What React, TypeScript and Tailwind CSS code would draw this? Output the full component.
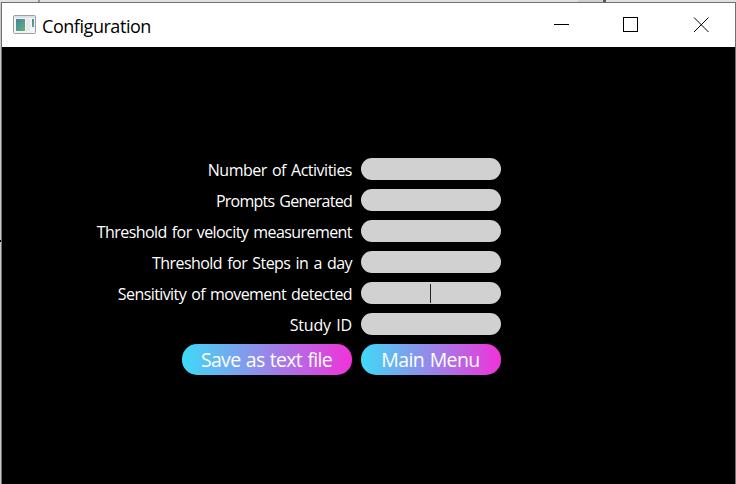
import React from "react";

const fields = [
  { label: "Number of Activities", tracking: "tracking-[-0.5px]" },
  { label: "Prompts Generated", tracking: "tracking-[-0.74px]" },
  { label: "Threshold for velocity measurement", tracking: "tracking-[-0.57px]" },
  { label: "Threshold for Steps in a day", tracking: "tracking-[-0.54px]" },
  { label: "Sensitivity of movement detected", tracking: "tracking-[-0.59px]", caret: true },
  { label: "Study ID", tracking: "tracking-[-0.2px]" },
];

function AppIcon() {
  return (
    <svg width="24" height="20" viewBox="0 0 24 20" className="shrink-0">
      <defs>
        <linearGradient id="pane" x1="0" y1="0" x2="1" y2="1">
          <stop offset="0" stopColor="#4284a0" />
          <stop offset="1" stopColor="#63b278" />
        </linearGradient>
      </defs>
      <rect x="0.5" y="0.5" width="22" height="18" rx="1" fill="#f3f4f5" stroke="#9a9fa5" />
      <rect x="1" y="1" width="21" height="2" fill="#dce0e5" />
      <rect x="3" y="4" width="9" height="12" fill="url(#pane)" />
      <rect x="13" y="4" width="4" height="12" fill="#e7e9ea" />
      <rect x="19" y="4" width="2" height="8" fill="url(#pane)" />
    </svg>
  );
}

export default function App() {
  return (
    <div className="flex h-[484px] w-[736px] flex-col overflow-hidden bg-[#e1e1e1] font-['Open_Sans','Noto_Sans',sans-serif]">
      <div className="flex h-[2px] shrink-0">
        <div className="ml-[38px] w-[2px] bg-[#a98f88]" />
        <div className="ml-[538px] w-[25px] bg-[#d0d0d0]" />
        <div className="w-[3px] bg-[#55555c]" />
      </div>
      <div className="flex min-h-0 flex-1">
        <div className="flex w-px flex-col bg-[#c9c9c9]">
          <div className="mt-[238px] h-[2px] bg-black" />
        </div>
        <div className="flex flex-1 flex-col border-x border-t border-[#707070] bg-black">
          <header className="flex h-[44px] shrink-0 items-center bg-white pl-[11px] text-black">
            <AppIcon />
            <h1 className="ml-[5px] pt-px text-[18px] leading-[24px] tracking-[-0.45px]">Configuration</h1>
            <svg width="156" height="16" viewBox="0 0 156 16" fill="none" stroke="black" className="mr-[25px] ml-auto">
              <path d="M0 7.5H15" />
              <rect x="69.5" y="0.5" width="14" height="14" />
              <path d="M140 0.5L154.5 15M154.5 0.5L140 15" />
            </svg>
          </header>
          <main className="ml-[59px] flex w-[440px] flex-col gap-[9px] pt-[111px]">
            {fields.map(({ label, tracking, caret }) => (
              <label key={label} className="flex h-[22px] items-center justify-end gap-[9px]">
                <span className={`pt-[2px] text-[16px] leading-[22px] whitespace-nowrap text-white [word-spacing:1.5px] ${tracking}`}>
                  {label}
                </span>
                <span className="flex h-[22px] w-[140px] shrink-0 justify-center rounded-[11px] bg-[#d1d1d1] pt-[2px]">
                  {caret && <span className="mr-px h-[19px] w-px bg-[#222]" />}
                </span>
              </label>
            ))}
            <div className="flex justify-end gap-[9px] text-white">
              <button className="h-[31px] w-[170px] rounded-[15px] bg-[linear-gradient(to_right,#3fdaf7,#f132da)] pt-px pr-px text-[19.5px] leading-[30px] tracking-[-0.7px] whitespace-nowrap [word-spacing:1px]">
                Save as text file
              </button>
              <button className="h-[31px] w-[140px] rounded-[15px] bg-[linear-gradient(to_right,#3fdaf7,#f132da)] pt-px pr-px text-[19.5px] leading-[30px] tracking-[-0.6px] whitespace-nowrap [word-spacing:1px]">
                Main Menu
              </button>
            </div>
          </main>
        </div>
      </div>
    </div>
  );
}
